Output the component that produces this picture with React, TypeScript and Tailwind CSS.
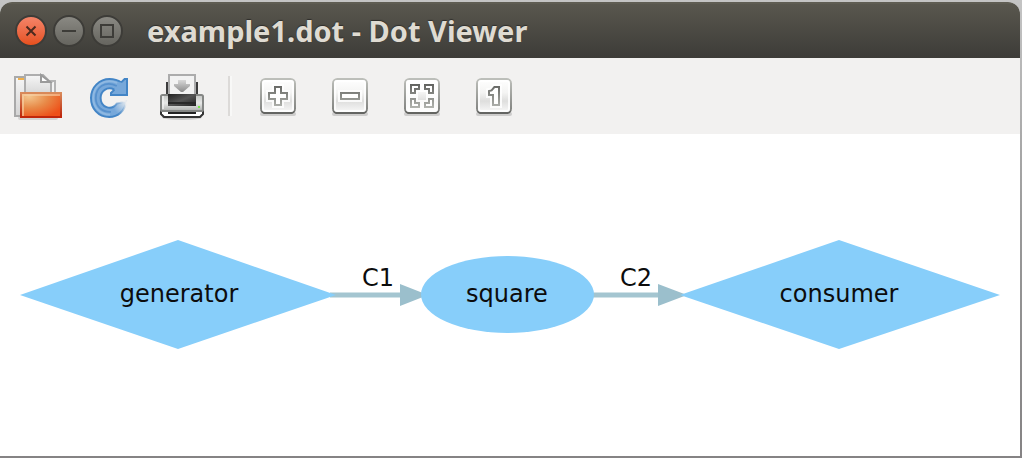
import type { ReactNode } from "react";

const round = "flex size-8 items-center justify-center rounded-full border-2 border-[#3d3c38]";

function ToolButton({ label, children }: { label: string; children: ReactNode }) {
  return (
    <button type="button" aria-label={label} title={label} className="flex h-12 w-[72px] items-center justify-center">
      <svg viewBox="0 0 24 24" className="size-12" aria-hidden="true">
        {children}
      </svg>
    </button>
  );
}

function Defs() {
  return (
    <svg className="absolute size-0" aria-hidden="true">
      <defs>
        <linearGradient id="page" x1="0" y1="0" x2="0" y2="1">
          <stop offset="0" stopColor="#f6f6f6" />
          <stop offset="1" stopColor="#d4d4d4" />
        </linearGradient>
        <radialGradient id="folder" cx="0.2" cy="0.15" r="0.95">
          <stop offset="0" stopColor="#f3c58c" />
          <stop offset="0.5" stopColor="#e88a48" />
          <stop offset="1" stopColor="#ee5018" />
        </radialGradient>
        <linearGradient id="folderEdge" x1="0" y1="0" x2="0" y2="1">
          <stop offset="0" stopColor="#d98a5a" />
          <stop offset="1" stopColor="#bb2208" />
        </linearGradient>
        <linearGradient id="body" x1="0" y1="0" x2="0" y2="1">
          <stop offset="0" stopColor="#c4c6c4" />
          <stop offset="0.5" stopColor="#e8e9e8" />
          <stop offset="1" stopColor="#aeb0ae" />
        </linearGradient>
        <linearGradient id="slot" x1="0" y1="0" x2="1" y2="1">
          <stop offset="0" stopColor="#222" />
          <stop offset="0.5" stopColor="#555" />
          <stop offset="1" stopColor="#222" />
        </linearGradient>
        <linearGradient id="arrow" x1="0" y1="0" x2="0" y2="1">
          <stop offset="0" stopColor="#d8d8d8" />
          <stop offset="1" stopColor="#8c8c8c" />
        </linearGradient>
        <linearGradient id="key" x1="0" y1="0" x2="0" y2="1">
          <stop offset="0" stopColor="#ffffff" />
          <stop offset="0.4" stopColor="#f4f4f3" />
          <stop offset="0.65" stopColor="#dededd" />
          <stop offset="1" stopColor="#fafafa" />
        </linearGradient>
        <linearGradient id="keyEdge" x1="0" y1="0" x2="0" y2="1">
          <stop offset="0" stopColor="#bdbfba" />
          <stop offset="0.9" stopColor="#858683" />
          <stop offset="1" stopColor="#5c5d5a" />
        </linearGradient>
        <linearGradient id="ink" gradientUnits="userSpaceOnUse" x1="0" y1="6" x2="0" y2="18">
          <stop offset="0" stopColor="#61625f" />
          <stop offset="1" stopColor="#b3b5b0" />
        </linearGradient>
        <radialGradient id="ringEdge" gradientUnits="userSpaceOnUse" cx="19.5" cy="15.5" r="7">
          <stop offset="0.1" stopColor="#4385c6" stopOpacity="0" />
          <stop offset="1" stopColor="#4385c6" />
        </radialGradient>
        <radialGradient id="ringFill" gradientUnits="userSpaceOnUse" cx="20" cy="15" r="7">
          <stop offset="0" stopColor="#77a8da" stopOpacity="0.1" />
          <stop offset="1" stopColor="#77a8da" />
        </radialGradient>
      </defs>
    </svg>
  );
}

function Key({ children }: { children: ReactNode }) {
  return (
    <>
      <rect x="3" y="20" width="18" height="2" rx="1" fill="#000" opacity="0.15" />
      <rect x="3.5" y="3.5" width="17" height="17" rx="2.2" fill="url(#key)" stroke="url(#keyEdge)" />
      <path d="M5 20.5H19" stroke="#646562" />
      <rect x="4.5" y="4.5" width="15" height="15" rx="1" fill="none" stroke="#fff" opacity="0.8" />
      <g fill="#fff" stroke="#fff" strokeWidth="3" opacity="0.85">{children}</g>
      <g fill="#fff" stroke="url(#ink)">{children}</g>
    </>
  );
}

function OpenIcon() {
  return (
    <>
      <rect x="2" y="22" width="20" height="2" rx="1" fill="#000" opacity="0.12" />
      <path d="M0.5 22V2.5H5.5V22Z" fill="url(#page)" stroke="#a9a9a9" />
      <path d="M2 3.5H5" stroke="#f0b04c" />
      <path d="M17.5 4.5H20.5V12H17.5Z" fill="#f4f4f4" stroke="#b4b4b4" />
      <path d="M5.5 12V1.5H14.5L18.5 5.5V12" fill="url(#page)" stroke="#aeaeae" />
      <path d="M13.5 1.5V5H18Z" fill="#fff" stroke="#9b9b9b" />
      <rect x="3.5" y="10.5" width="20" height="12" fill="url(#folder)" stroke="url(#folderEdge)" />
      <path d="M4.5 22V11.5H23" fill="none" stroke="#f9d3ac" opacity="0.6" />
      <path d="M3 22.5H24" stroke="#c0270c" />
    </>
  );
}

function ReloadIcon() {
  return (
    <>
      <path
        d="M17.6 5.2L14.2 8.8C10.5 7 7.3 9.5 7.3 13C7.3 17.5 12.5 19.8 15.4 15.8L20 14.8C19.5 19.5 16 22.5 11.6 22.5C6 22.5 2.5 18.2 2.5 13C2.5 7.5 6.8 3.5 11.8 3.5C14.1 3.5 16 4.1 17.6 5.2Z"
        fill="url(#ringFill)"
        stroke="url(#ringEdge)"
      />
      <path d="M17.6 5.2L19.3 3.5H20.5V11.5H12.5V10.5L14.2 8.8L14 5Z" fill="#77a8da" />
      <path d="M17.6 5.2L19.3 3.5H20.5V11.5H12.5V10.5L14.2 8.8" fill="none" stroke="#4385c6" />
      <path d="M15.4 7C9.5 4 4.9 7.8 4.9 13C4.9 17.5 8.4 20.2 12.5 19.9" fill="none" stroke="#5791cd" strokeWidth="0.9" />
      <path d="M15.6 5.4C9 2.8 3.6 7.2 3.6 13C3.6 17.8 7.2 21.3 12 21.3" fill="none" stroke="#8fb9e2" strokeWidth="0.9" />
    </>
  );
}

function PrintIcon() {
  return (
    <>
      <ellipse cx="12" cy="22.8" rx="10" ry="1.2" fill="#000" opacity="0.15" />
      <path d="M4.5 5V12M19.5 5V12" stroke="#3c3c3c" />
      <rect x="5.5" y="1.5" width="13" height="11" fill="#f2f2f2" stroke="#acacac" />
      <path d="M10 4H14V6H16V7L12.5 10H11.5L8 7V6H10Z" fill="url(#arrow)" />
      <path d="M1.5 19V21L3 22.5H21L22.5 21V19Z" fill="#fff" stroke="#333" />
      <path d="M5 20.5H19" stroke="#222" />
      <rect x="1.5" y="11.5" width="21" height="8" rx="0.8" fill="url(#body)" stroke="#858785" />
      <path d="M2.5 12V18.5" stroke="#f3f3f3" opacity="0.7" />
      <rect x="5" y="11" width="14" height="6" fill="url(#slot)" />
      <path d="M5 15.5H19" stroke="#292929" />
      <rect x="20" y="17" width="1" height="1" fill="#76e84a" />
    </>
  );
}

function Graph() {
  return (
    <svg viewBox="0 0 1020 322" className="w-full" role="img" aria-label="Graph of example1.dot">
      <g fill="#9bbfcc">
        <path d="M330 161H404M592 161H662" stroke="#a4c5d0" strokeWidth="5" />
        <path d="M400 150L428 161L400 172ZM658 150L687 161L658 172Z" />
      </g>
      <g fill="#87cefa">
        <path d="M20 161L178 106L336 161L178 215Z" />
        <ellipse cx="507.5" cy="160.5" rx="86.5" ry="38.5" />
        <path d="M680 161L839 106L1000 161L839 215Z" />
      </g>
      <g fill="#0c0c0c" textAnchor="middle" fontSize="24" className="font-['DejaVu_Sans',sans-serif]">
        <text x="179" y="168">generator</text>
        <text x="507" y="168">square</text>
        <text x="839" y="168">consumer</text>
        <text x="378" y="152">C1</text>
        <text x="636" y="152">C2</text>
      </g>
    </svg>
  );
}

export default function App() {
  return (
    <div className="min-h-screen bg-linear-to-b from-[#c4c4c4] via-[#999] to-[#858384] pt-0.5 pr-0.5 pb-0.5">
      <Defs />
      <main className="overflow-hidden rounded-t-xl bg-white">
        <header className="flex h-14 items-center gap-1.5 border-t-2 border-[#5f5d53] bg-linear-to-b from-[#59574e] to-[#3d3c38] pl-[15px]">
          <button type="button" aria-label="Close" className={`${round} bg-linear-to-b from-[#f48468] to-[#e6501c]`}>
            <svg viewBox="0 0 12 12" className="size-3" aria-hidden="true">
              <path d="M1.5 1.5L10.5 10.5M10.5 1.5L1.5 10.5" stroke="#4c2a1e" strokeWidth="2" />
            </svg>
          </button>
          <button type="button" aria-label="Minimize" className={`${round} bg-linear-to-b from-[#8a8983] to-[#66655f]`}>
            <svg viewBox="0 0 14 14" className="size-3.5" aria-hidden="true">
              <path d="M0 7H14" stroke="#3d3c38" strokeWidth="2" />
            </svg>
          </button>
          <button type="button" aria-label="Maximize" className={`${round} bg-linear-to-b from-[#8a8983] to-[#66655f]`}>
            <svg viewBox="0 0 14 14" className="size-3.5" aria-hidden="true">
              <path d="M1 1H13V13H1Z" fill="none" stroke="#3d3c38" strokeWidth="2" />
            </svg>
          </button>
          <h1 className="ml-[18px] font-['Noto_Sans',sans-serif] text-[29px] leading-8 font-bold whitespace-nowrap text-[#dfdbd2] text-shadow-[0_-1px_1px_#2f2e2b]">
            example1.dot - Dot Viewer
          </h1>
        </header>
        <div role="toolbar" aria-label="Viewer" className="flex h-[76px] items-center bg-[#f2f1f0] pl-0.5">
          <ToolButton label="Open"><OpenIcon /></ToolButton>
          <ToolButton label="Reload"><ReloadIcon /></ToolButton>
          <ToolButton label="Print"><PrintIcon /></ToolButton>
          <div className="mx-2.5 h-10 w-1 border-r-2 border-l-2 border-r-[#f8f8f7] border-l-[#dcdad8]" />
          <ToolButton label="Zoom in">
            <Key><path d="M10.5 7.5H13.5V10.5H16.5V13.5H13.5V16.5H10.5V13.5H7.5V10.5H10.5Z" /></Key>
          </ToolButton>
          <ToolButton label="Zoom out">
            <Key><path d="M7.5 10.5H16.5V13.5H7.5Z" /></Key>
          </ToolButton>
          <ToolButton label="Zoom to fit">
            <Key>
              <path d="M6.5 6.5H10.5V8.5H8.5V10.5H6.5ZM17.5 6.5H13.5V8.5H15.5V10.5H17.5ZM6.5 17.5H10.5V15.5H8.5V13.5H6.5ZM17.5 17.5H13.5V15.5H15.5V13.5H17.5Z" />
            </Key>
          </ToolButton>
          <ToolButton label="Zoom to original size">
            <Key><path d="M12.2 7.5H14.5V16.5H11.5V11.5H9.5V9.5L10.8 9.2Z" /></Key>
          </ToolButton>
        </div>
        <Graph />
      </main>
    </div>
  );
}
